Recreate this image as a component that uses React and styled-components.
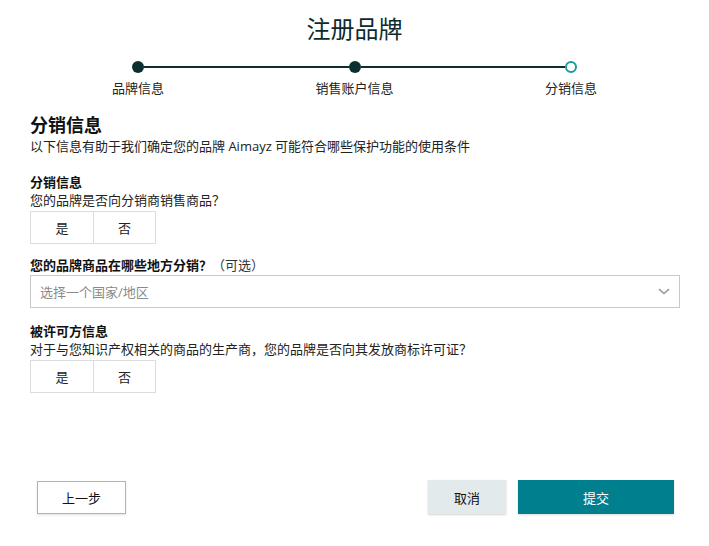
import React from 'react'
import styled, { createGlobalStyle } from 'styled-components'

const GlobalStyle = createGlobalStyle`
  * { box-sizing: border-box; }
  body {
    margin: 0;
    background: #fff;
    font-family: "Open Sans", "Noto Sans CJK SC", sans-serif;
    color: #111;
  }
`

const Page = styled.div`
  min-height: 100vh;
  display: flex;
  flex-direction: column;
`

const Title = styled.h1`
  margin: 13px 0 0;
  text-align: center;
  font-size: 24px;
  line-height: 32px;
  font-weight: 400;
  color: #0d2a2c;
`

const Stepper = styled.div`
  display: flex;
  margin: 16px 132px 0;
`

const Step = styled.div`
  width: 12px;
  display: flex;
  flex-direction: column;
  align-items: center;
`

const Dot = styled.span`
  width: 12px;
  height: 12px;
  border-radius: 50%;
  background: ${p => (p.$open ? '#fff' : '#0d2e2e')};
  border: ${p => (p.$open ? '2px solid #1a9ba1' : 'none')};
`

const StepLabel = styled.span`
  margin-top: 6px;
  font-size: 13px;
  line-height: 18px;
  white-space: nowrap;
  color: #222;
`

const Line = styled.div`
  flex: 1;
  height: 2px;
  margin-top: 5px;
  background: #0d2e2e;
`

const Content = styled.div`
  padding: 16px 29px 0 30px;
`

const Heading = styled.h2`
  margin: 0;
  font-size: 18px;
  line-height: 24px;
  font-weight: 700;
  color: #0f1111;
`

const Text = styled.p`
  margin: ${p => p.$mt || 0} 0 0;
  font-size: 13px;
  line-height: 18px;
  color: #222;
`

const Label = styled.div`
  margin-top: ${p => p.$mt || '0'};
  font-size: 13px;
  line-height: 18px;
  font-weight: 700;
  color: #111;
`

const Optional = styled.span`
  font-weight: 400;
  color: #333;
`

const Toggle = styled.div`
  margin-top: ${p => p.$mt || '2px'};
  display: inline-flex;
  border: 1px solid #dcdcdc;
`

const ToggleOption = styled.button`
  width: 62px;
  height: 31px;
  border: none;
  background: #fff;
  font: inherit;
  font-size: 13px;
  color: #222;
  & + & {
    border-left: 1px solid #dcdcdc;
  }
`

const Select = styled.div`
  margin-top: 1px;
  height: 33px;
  display: flex;
  align-items: center;
  justify-content: space-between;
  padding: 0 9px 0 9px;
  border: 1px solid #c9c9c9;
  font-size: 13px;
  color: #8a8a8a;
`

const Footer = styled.div`
  margin-top: auto;
  display: flex;
  align-items: center;
  gap: 12px;
  padding: 0 35px 32px 37px;
`

const Button = styled.button`
  height: 34px;
  padding: 0;
  font: inherit;
  font-size: 13px;
  cursor: pointer;
  width: ${p => p.$w};
`

const BackButton = styled(Button)`
  height: 33px;
  margin-right: auto;
  background: #fff;
  color: #111;
  border: 1px solid #8cc4c4;
  box-shadow: 0 1px 2px rgba(0, 0, 0, 0.12);
`

const CancelButton = styled(Button)`
  background: #e3eaeb;
  color: #111;
  border: none;
  box-shadow: 0 1px 2px rgba(0, 0, 0, 0.18);
`

const SubmitButton = styled(Button)`
  background: #00808f;
  color: #fff;
  border: none;
  box-shadow: 0 1px 2px rgba(0, 0, 0, 0.15);
`

const Chevron = () => (
  <svg width="12" height="7" viewBox="0 0 12 7" fill="none">
    <path d="M1 1.2 L6 5.5 L11 1.2" stroke="#9a9a9a" strokeWidth="1.6" />
  </svg>
)

const steps = ['品牌信息', '销售账户信息', '分销信息']

const App = () => {
  return (
    <Page>
      <GlobalStyle />
      <Title>注册品牌</Title>
      <Stepper>
        {steps.map((s, i) => (
          <React.Fragment key={s}>
            {i > 0 && <Line />}
            <Step>
              <Dot $open={i === steps.length - 1} />
              <StepLabel>{s}</StepLabel>
            </Step>
          </React.Fragment>
        ))}
      </Stepper>
      <Content>
        <Heading>分销信息</Heading>
        <Text>以下信息有助于我们确定您的品牌 Aimayz 可能符合哪些保护功能的使用条件</Text>

        <Label $mt="18px">分销信息</Label>
        <Text>您的品牌是否向分销商销售商品？</Text>
        <Toggle>
          <ToggleOption>是</ToggleOption>
          <ToggleOption>否</ToggleOption>
        </Toggle>

        <Label $mt="12px">
          您的品牌商品在哪些地方分销？<Optional>（可选）</Optional>
        </Label>
        <Select>
          <span>选择一个国家/地区</span>
          <Chevron />
        </Select>

        <Label $mt="14px">被许可方信息</Label>
        <Text>对于与您知识产权相关的商品的生产商，您的品牌是否向其发放商标许可证？</Text>
        <Toggle $mt="2px">
          <ToggleOption>是</ToggleOption>
          <ToggleOption>否</ToggleOption>
        </Toggle>
      </Content>
      <Footer>
        <BackButton $w="89px">上一步</BackButton>
        <CancelButton $w="78px">取消</CancelButton>
        <SubmitButton $w="156px">提交</SubmitButton>
      </Footer>
    </Page>
  )
}

export default App
